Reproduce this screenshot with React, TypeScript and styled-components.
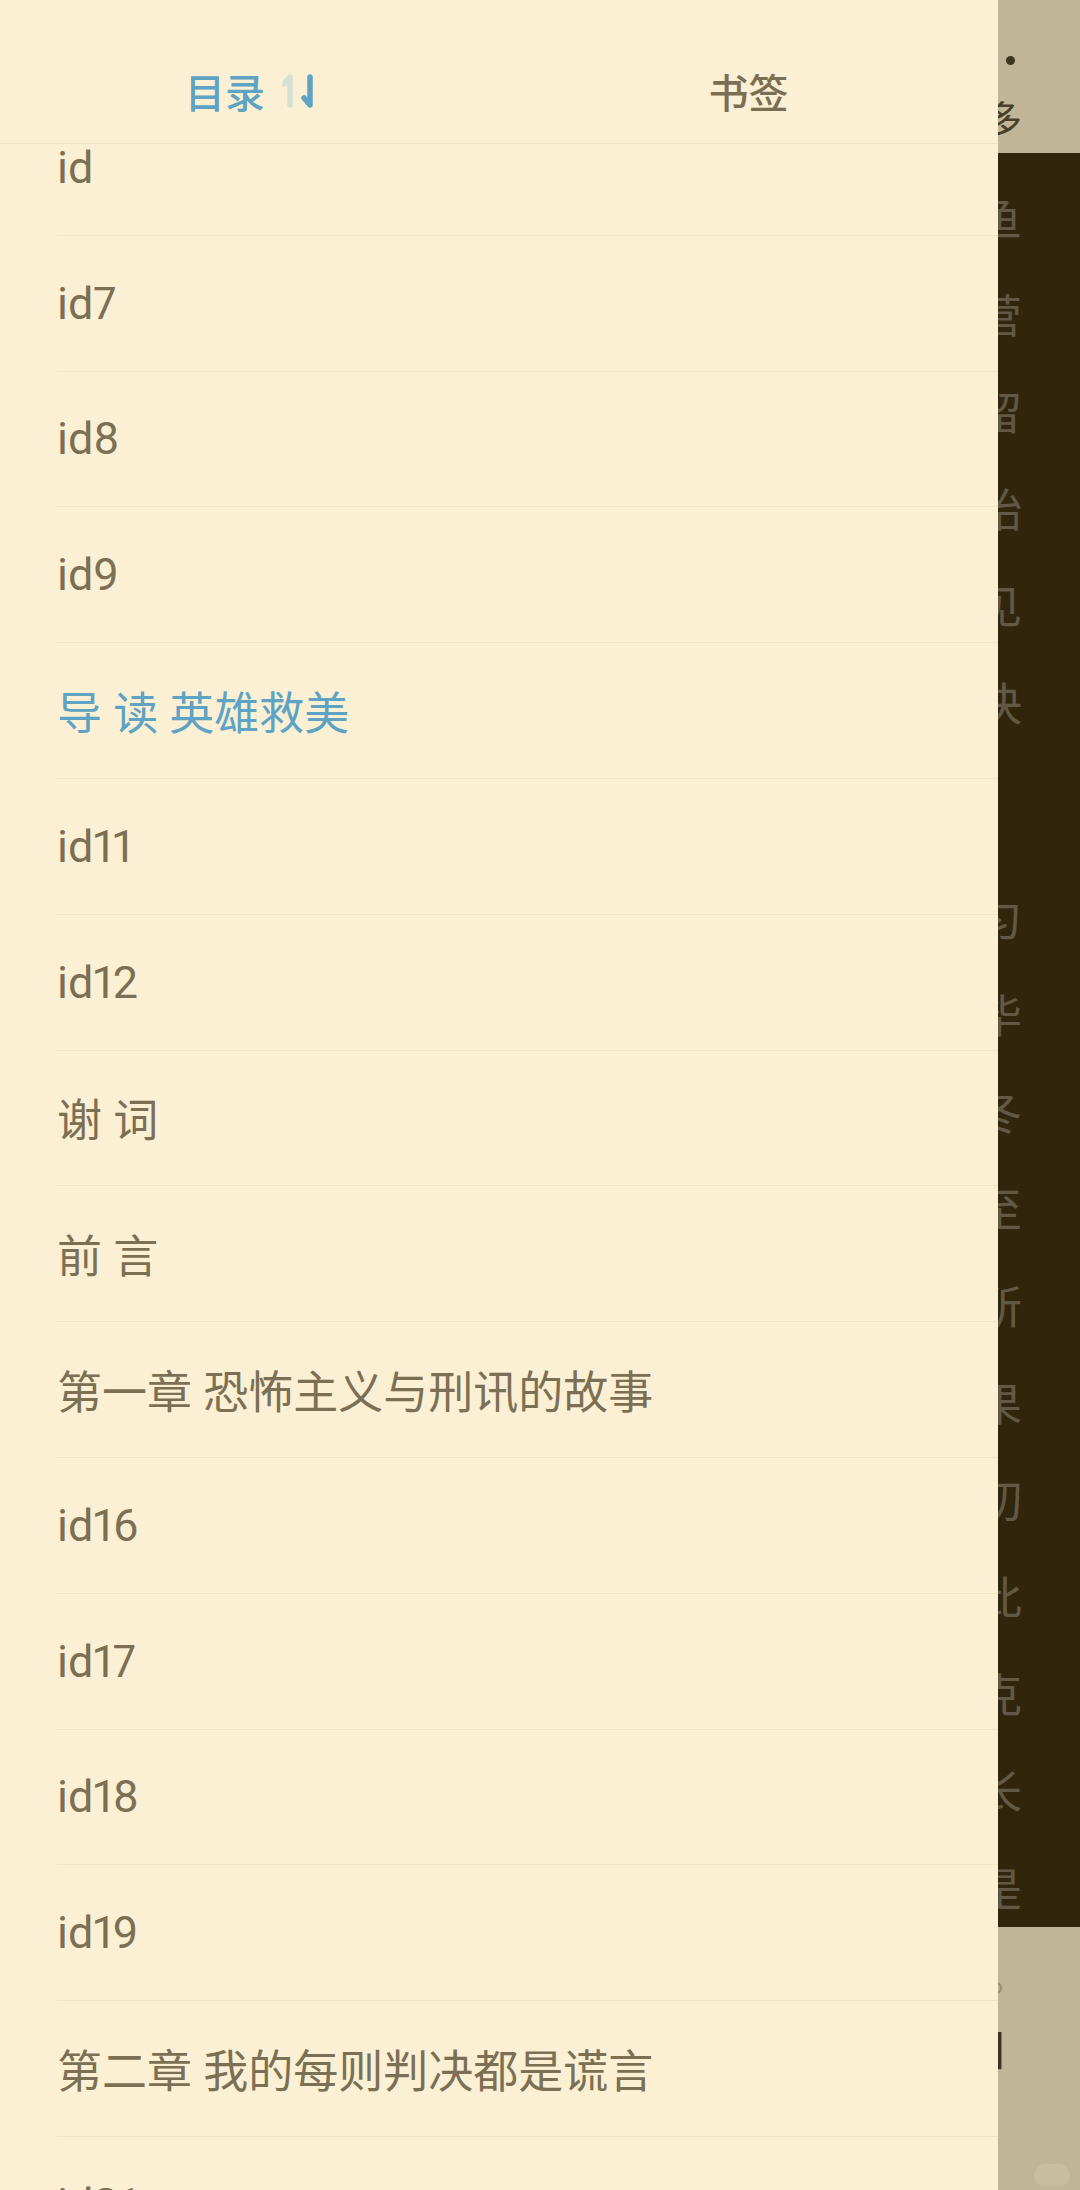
import React, { useLayoutEffect, useRef } from "react";
import styled, { createGlobalStyle } from "styled-components";

const GlobalStyle = createGlobalStyle`
  html, body {
    margin: 0;
    padding: 0;
    width: 1080px;
    height: 2190px;
    overflow: hidden;
    font-family: Roboto, "Noto Sans CJK SC", sans-serif;
  }
`;

const Screen = styled.div`
  position: relative;
  width: 1080px;
  height: 2190px;
  overflow: hidden;
`;

/* the reading page that lies under the drawer */
const Reader = styled.div`
  display: flex;
  flex-direction: column;
  height: 100%;
  background: #c1b597;
`;

const ReaderTop = styled.div`
  height: 153px;
  display: flex;
  flex-direction: column;
  align-items: flex-end;
  padding-right: 58px;
  box-sizing: border-box;

  .dot {
    width: 9px;
    height: 9px;
    border-radius: 50%;
    background: #3f3622;
    margin: 56px 7px 0 0;
  }

  .label {
    margin-top: 30px;
    font-family: "Noto Sans CJK SC", sans-serif;
    font-size: 38px;
    line-height: 44px;
    color: #4a4029;
  }
`;

const ReaderBody = styled.div`
  height: 1774px;
  background: #31260c;
  padding: 15px 58px 0 0;
  box-sizing: border-box;
`;

const Paragraph = styled.div<{ $gap?: number }>`
  margin-top: ${(p) => p.$gap || 0}px;
`;

const Line = styled.div`
  text-align: right;
  font-family: "Noto Sans CJK SC", sans-serif;
  font-size: 45px;
  line-height: 97px;
  height: 97px;
  color: #625944;
  white-space: nowrap;
`;

const ReaderBottom = styled.div`
  flex: 1;
  position: relative;
  display: flex;
  flex-direction: column;
  align-items: flex-end;
  padding-right: 52px;
  font-family: "Noto Sans CJK SC", sans-serif;

  .mark {
    font-size: 40px;
    color: #9a8f73;
    margin-top: 23px;
    line-height: 48px;
  }

  .bracket {
    font-size: 40px;
    color: #3d3420;
    margin-top: 27px;
    line-height: 48px;
  }
`;

const Pill = styled.div`
  position: absolute;
  right: 10px;
  bottom: 4px;
  width: 36px;
  height: 22px;
  border-radius: 11px;
  background: #c8bda1;
`;

/* drawer */
const Drawer = styled.div`
  position: absolute;
  top: 0;
  left: 0;
  width: 998px;
  height: 2190px;
  background: #fbf0d3;
  display: flex;
  flex-direction: column;
`;

const Header = styled.div`
  height: 144px;
  flex-shrink: 0;
  display: grid;
  grid-template-columns: 1fr 1fr;
  border-bottom: 1px solid #efe3c3;
  box-sizing: border-box;
  position: relative;
  z-index: 1;
  background: #fbf0d3;
`;

const Tab = styled.div<{ $active?: boolean }>`
  display: flex;
  align-items: center;
  justify-content: center;
  gap: 17px;
  padding-top: 38px;
  font-family: "Noto Sans CJK SC", sans-serif;
  font-size: 40px;
  font-weight: 500;
  color: ${(p) => (p.$active ? "#5ea3c3" : "#7a6f52")};
  svg {
    display: block;
  }
`;

const List = styled.div`
  flex: 1;
  overflow-y: auto;
  scrollbar-width: none;
  &::-webkit-scrollbar {
    display: none;
  }
`;

const Row = styled.div<{ $active?: boolean }>`
  margin-left: 57px;
  height: 135.8px;
  box-sizing: border-box;
  border-bottom: 1px solid #f1e5c5;
  display: flex;
  align-items: center;
  font-size: 45px;
  font-variant-numeric: proportional-nums;
  color: ${(p) => (p.$active ? "#5ea3c3" : "#7b7054")};
  white-space: nowrap;
`;

const SortIcon = () => (
  <svg width="32" height="34" viewBox="0 0 32 34" fill="none">
    <g stroke="#d7e1d3" strokeWidth="5.5" strokeLinecap="round" strokeLinejoin="round">
      <path d="M8 31V3L2 10" />
    </g>
    <g stroke="#5ea3c3" strokeWidth="5.5" strokeLinecap="round" strokeLinejoin="round">
      <path d="M28 3v28l-6-7" />
    </g>
  </svg>
);

const chapters = [
  "id1",
  "id2",
  "id3",
  "id4",
  "id5",
  "id",
  "id7",
  "id8",
  "id9",
  "导 读 英雄救美",
  "id11",
  "id12",
  "谢 词",
  "前 言",
  "第一章 恐怖主义与刑讯的故事",
  "id16",
  "id17",
  "id18",
  "id19",
  "第二章 我的每则判决都是谎言",
  "id21",
  "id22",
  "id23",
];

const firstVisible = 5;
const activeIndex = 9;

const pageLines1 = ["像一条鱼", "在营", "他们留", "开始", "看见", "判决"];
const pageLines2 = ["均匀", "完毕", "冬", "不至", "所", "结果", "一切", "此", "克", "长", "是"];

const App: React.FC = () => {
  const listRef = useRef<HTMLDivElement>(null);
  const rowRef = useRef<HTMLDivElement>(null);

  useLayoutEffect(() => {
    if (listRef.current && rowRef.current) {
      listRef.current.scrollTop =
        rowRef.current.offsetTop - listRef.current.offsetTop + 44;
    }
  }, []);

  return (
    <>
      <GlobalStyle />
      <Screen>
        <Reader>
          <ReaderTop>
            <div className="dot" />
            <div className="label">更多</div>
          </ReaderTop>
          <ReaderBody>
            <Paragraph>
              {pageLines1.map((l, i) => (
                <Line key={i}>{l}</Line>
              ))}
            </Paragraph>
            <Paragraph $gap={118}>
              {pageLines2.map((l, i) => (
                <Line key={i}>{l}</Line>
              ))}
            </Paragraph>
          </ReaderBody>
          <ReaderBottom>
            <div className="mark">。</div>
            <div className="bracket">】</div>
            <Pill />
          </ReaderBottom>
        </Reader>

        <Drawer>
          <Header>
            <Tab $active>
              <span>目录</span>
              <SortIcon />
            </Tab>
            <Tab>书签</Tab>
          </Header>
          <List ref={listRef}>
            {chapters.map((c, i) => (
              <Row
                key={i}
                ref={i === firstVisible ? rowRef : undefined}
                $active={i === activeIndex}
              >
                {c}
              </Row>
            ))}
          </List>
        </Drawer>
      </Screen>
    </>
  );
};

export default App;
